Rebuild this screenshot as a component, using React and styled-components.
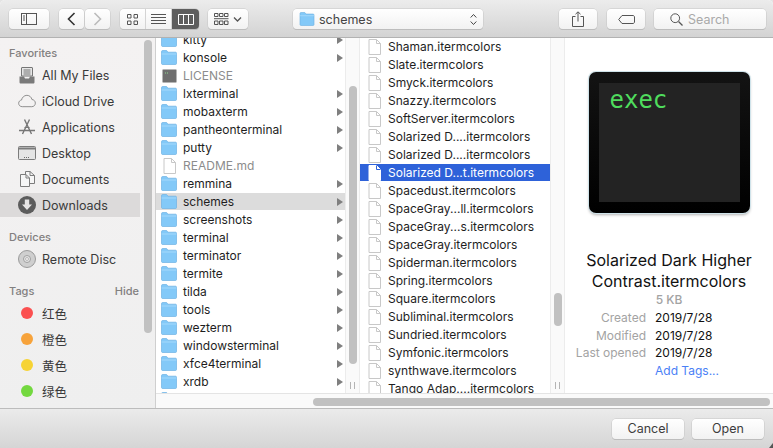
import React from 'react';
import styled, { createGlobalStyle } from 'styled-components';

const Global = createGlobalStyle`
	html, body { margin: 0; padding: 0; background: #e4e4e4; }
	body { font-family: Inter, "Noto Sans CJK SC", sans-serif; -webkit-font-smoothing: antialiased; }
	* { box-sizing: border-box; }
`;

const Win = styled.div`
	position: relative;
	width: 773px;
	height: 448px;
	display: flex;
	flex-direction: column;
	overflow: hidden;
	border-radius: 5px 5px 0 0;
	background: #fff;
`;

const Toolbar = styled.div`
	height: 38px;
	flex: none;
	display: flex;
	align-items: center;
	padding: 1px 8px 0 9px;
	background: linear-gradient(#ececec, #d3d3d3);
	border-bottom: 1px solid #b2b2b2;
`;

const Btn = styled.div`
	width: ${p => p.$w}px;
	height: 20px;
	margin-left: ${p => p.$ml || 0}px;
	flex: none;
	display: flex;
	align-items: center;
	justify-content: center;
	background: linear-gradient(#ffffff, #f2f2f2);
	border-radius: 4px;
	box-shadow: 0 0 0 0.5px #c6c6c6, 0 1px 0 #b4b4b4;
`;

const Seg = styled.div`
	width: ${p => p.$w}px;
	height: 20px;
	display: flex;
	align-items: center;
	justify-content: center;
	background: ${p => (p.$on ? '#5e5e5e' : 'linear-gradient(#ffffff, #f2f2f2)')};
	border-right: ${p => (p.$last ? 'none' : '1px solid #d4d4d4')};
`;

const Group = styled.div`
	display: flex;
	margin-left: ${p => p.$ml}px;
	border-radius: 4px;
	overflow: hidden;
	flex: none;
	box-shadow: 0 0 0 0.5px #c6c6c6, 0 1px 0 #b4b4b4;
`;

const PathLabel = styled.span`
	flex: 1;
	font-size: 12.5px;
	color: #444;
	margin-left: 4px;
`;

const PathBtn = styled(Btn)`
	justify-content: flex-start;
	padding: 0 6px;
`;

const SearchBox = styled(Btn)`
	justify-content: flex-start;
	padding-left: 16px;
	gap: 5px;
	font-size: 12.5px;
	color: #a9a9a9;
`;

const Main = styled.div`
	flex: 1;
	min-height: 0;
	display: flex;
`;

const Sidebar = styled.div`
	position: relative;
	width: 156px;
	flex: none;
	padding-top: 6px;
	background: linear-gradient(#f4f2f2, #efefef);
	border-right: 1px solid #cfcfcf;
	overflow: hidden;
`;

const SideHead = styled.div`
	height: 18px;
	margin-top: ${p => p.$mt || 0}px;
	padding: 0 16px 0 9px;
	display: flex;
	align-items: center;
	justify-content: space-between;
	font-size: 11px;
	font-weight: 500;
	color: #828080;
`;

const SideRow = styled.div`
	height: 26px;
	display: flex;
	align-items: center;
	width: 140px;
	gap: 6px;
	padding-left: ${p => (p.$tag ? 21 : 18)}px;
	font-size: 12.5px;
	color: #3a3a3a;
	background: ${p => (p.$on ? '#dcdada' : 'transparent')};
	box-shadow: ${p => (p.$on ? 'inset 0 1px 0 #f3f1f1, inset 0 -1px 0 #f3f1f1' : 'none')};
`;

const IconBox = styled.span`
	width: ${p => p.$w || 18}px;
	height: 18px;
	display: flex;
	align-items: center;
	justify-content: center;
	flex: none;
`;

const Dot = styled.span`
	width: 12px;
	height: 12px;
	border-radius: 50%;
	margin-right: 3px;
	flex: none;
	background: ${p => p.$c};
`;

const Thumb = styled.div`
	position: absolute;
	width: 8px;
	left: ${p => p.$l}px;
	top: ${p => p.$t}px;
	height: ${p => p.$h}px;
	border-radius: 4px;
	background: #c1c1c1;
`;

const Browser = styled.div`
	flex: 1;
	min-width: 0;
	display: flex;
	flex-direction: column;
`;

const Columns = styled.div`
	height: 355px;
	flex: none;
	display: flex;
	overflow: hidden;
`;

const Column = styled.div`
	width: ${p => p.$w}px;
	flex: none;
	overflow: hidden;
`;

const List = styled.div`
	margin-top: ${p => p.$mt || 0}px;
`;

const Row = styled.div`
	height: 17px;
	margin-bottom: 1px;
	display: flex;
	align-items: center;
	font-size: 12px;
	white-space: nowrap;
	padding-left: ${p => p.$pad}px;
	padding-right: 2px;
	color: ${p => (p.$sel ? '#fff' : p.$dim ? '#8c8c8c' : '#1e1e1e')};
	background: ${p => (p.$sel ? '#2e62d9' : p.$act ? '#dcdcdc' : 'transparent')};
`;

const RowText = styled.span`
	flex: 1;
	margin-left: ${p => p.$ml}px;
`;

const Gutter = styled.div`
	position: relative;
	width: 15px;
	flex: none;
	background: #fafafa;
	border-left: 1px solid #ececec;
	border-right: 1px solid #ececec;
`;

const Handle = styled.span`
	position: absolute;
	left: 4px;
	bottom: 4px;
	width: 5px;
	height: 7px;
	border-left: 1px solid #b4b4b4;
	border-right: 1px solid #b4b4b4;
`;

const Preview = styled.div`
	flex: 1;
	display: flex;
	flex-direction: column;
	align-items: center;
	padding-top: 34px;
`;

const Tile = styled.div`
	width: 161px;
	height: 141px;
	padding: 11px 10px;
	border-radius: 7px;
	background: linear-gradient(#131313, #000);
	box-shadow: 0 0 0 1px #cfe3ea, 0 2px 3px rgba(0, 0, 0, 0.3);
`;

const Screen = styled.div`
	height: 119px;
	padding: 0 11px;
	background: #232323;
	color: #4fdc5d;
	font: 24px/34px "DejaVu Sans Mono", monospace;
`;

const FileName = styled.div`
	margin-top: 37px;
	text-align: center;
	font-size: 16px;
	line-height: 21px;
	color: #111;
`;

const Size = styled.div`
	margin-top: -1px;
	font-size: 12px;
	font-weight: 500;
	line-height: 18px;
	color: #a3a3a3;
`;

const Meta = styled.div`
	width: 100%;
	display: grid;
	grid-template-columns: 81px 1fr;
	column-gap: 9px;
	font-size: 12px;
	line-height: 17.5px;
`;

const MetaKey = styled.div`
	text-align: right;
	color: #a3a3a3;
	white-space: nowrap;
`;

const MetaVal = styled.div`
	color: ${p => (p.$link ? '#4a80f6' : '#111')};
`;

const HBar = styled.div`
	position: relative;
	height: 15px;
	flex: none;
	background: #fafafa;
	border-top: 1px solid #e4e4e4;
`;

const HThumb = styled.div`
	position: absolute;
	left: 157px;
	right: 3px;
	top: 4px;
	height: 8px;
	border-radius: 4px;
	background: #c1c1c1;
`;

const Footer = styled.div`
	height: 40px;
	flex: none;
	display: flex;
	justify-content: flex-end;
	align-items: center;
	gap: 8px;
	padding: 0 9px 0 0;
	background: linear-gradient(#ebebeb, #d5d5d5);
	border-top: 1px solid #bcbcbc;
`;

const ActionBtn = styled(Btn)`
	font-size: 12.5px;
	color: #3d3d3d;
`;

const Grip = styled.svg`
	position: absolute;
	right: 0;
	bottom: 0;
`;

const Folder = ({ w = 16, h = 15 }) => (
	<svg width={w} height={h} viewBox="0 0 16 15">
		<path d="M0.5 3V1.6C0.5 1 1 .5 1.6 .5H5.6L7 2.2H14.6C15.1 2.2 15.5 2.6 15.5 3.1V13.5C15.5 14 15.1 14.5 14.5 14.5H1.5C1 14.5 .5 14 .5 13.5Z" fill="#83c9f8" stroke="#6fb2e4" strokeWidth="0.7" />
		<path d="M.6 4H15.4" stroke="#a5d9fb" strokeWidth="1" />
	</svg>
);

const Doc = ({ sel }) => (
	<svg width="13" height="16" viewBox="0 0 13 16">
		<path d="M1 .5H8.5L12.5 4.5V15.5H1Z" fill="#fff" stroke={sel ? '#fff' : '#c8c8c8'} />
		<path d="M8.5 .5V4.5H12.5" fill="none" stroke={sel ? '#2e62d9' : '#c8c8c8'} />
	</svg>
);

const ExecDoc = () => (
	<svg width="15" height="14" viewBox="0 0 15 14">
		<rect x=".5" y=".5" width="14" height="13" rx="1" fill="#6f6f6f" stroke="#b5b5b5" />
		<path d="M3 4H7" stroke="#8fd98f" strokeDasharray="1 1" />
	</svg>
);

const Arrow = () => (
	<svg width="6" height="8" viewBox="0 0 6 8">
		<path d="M0 0L6 4L0 8Z" fill="#7f7f7f" />
	</svg>
);

const stroke = { fill: 'none', stroke: '#555', strokeWidth: 1 };

const sideIcons = {
	files: (
		<svg width="16" height="17" viewBox="0 0 16 17">
			<path d="M2.5 1C2.5 .7 2.7 .5 3 .5H13C13.3 .5 13.5 .7 13.5 1V9H2.5Z" fill="#e6e6e6" stroke="#757575" />
			<path d="M4.5 3H11.5M4.5 5H11.5M4.5 7H11.5" stroke="#757575" />
			<path d="M.5 9.5H5L6 11.5H10L11 9.5H15.5V15C15.5 16 15 16.5 14 16.5H2C1 16.5 .5 16 .5 15Z" fill="#7a7a7a" />
		</svg>
	),
	cloud: (
		<svg width="19" height="14" viewBox="0 0 19 14">
			<path d="M4.5 13C2.2 13 .7 11.4.7 9.4C.7 7.6 2 6.2 3.7 6C4.2 3.4 6.4 1 9.4 1C12.2 1 14.2 3 14.7 5.4C16.8 5.6 18.3 7.2 18.3 9.2C18.3 11.4 16.8 13 14.5 13Z" fill="none" stroke="#8a8a8a" />
		</svg>
	),
	apps: (
		<svg width="18" height="18" viewBox="0 0 18 18">
			<path d="M6.5 1.5L13.5 16M11.5 1.5L4.5 16M1 12.5H17" fill="none" stroke="#767676" strokeWidth="1.4" />
			<path d="M6.5 9.5H11.5" stroke="#767676" />
		</svg>
	),
	desktop: (
		<svg width="18" height="14" viewBox="0 0 18 14">
			<rect x=".5" y=".5" width="17" height="13" rx="1" fill="#e4e4e4" stroke="#7c7c7c" />
			<path d="M1 2.5H17" stroke="#7c7c7c" strokeWidth="2" />
			<path d="M6 11.5H7M8 11.5H9M10 11.5H11" stroke="#6a6a6a" />
		</svg>
	),
	docs: (
		<svg width="17" height="16" viewBox="0 0 17 16">
			<path d="M6.5 .5H11L15.5 4.5V12.5H6.5Z" fill="#f6f6f6" stroke="#7c7c7c" />
			<path d="M1.5 3.5H7L10.5 7V15.5H1.5Z" fill="#f6f6f6" stroke="#7c7c7c" />
			<path d="M7 3.5V7H10.5M11 .5V4.5H15.5" fill="none" stroke="#7c7c7c" />
		</svg>
	),
	down: (
		<svg width="18" height="18" viewBox="0 0 18 18">
			<circle cx="9" cy="9" r="9" fill="#5c5c5c" />
			<path d="M6.8 3.5H11.2V8.5H14L9 14L4 8.5H6.8Z" fill="#e6e4e4" />
		</svg>
	),
	disc: (
		<svg width="18" height="18" viewBox="0 0 18 18">
			<circle cx="9" cy="9" r="8.5" fill="#cfcfcf" stroke="#9a9a9a" />
			<circle cx="9" cy="9" r="3.5" fill="#e5e5e5" stroke="#9f9f9f" />
			<circle cx="9" cy="9" r="1.5" fill="#f3f1f1" stroke="#999" strokeWidth="0.6" />
		</svg>
	)
};

const favorites = [
	['files', 'All My Files'],
	['cloud', 'iCloud Drive'],
	['apps', 'Applications'],
	['desktop', 'Desktop'],
	['docs', 'Documents'],
	['down', 'Downloads', true]
];

const tags = [
	['#fb5050', '红色'],
	['#f7a33b', '橙色'],
	['#f6d334', '黄色'],
	['#73d83f', '绿色']
];

// the last entry only shows the top edge of its folder, its name is below the fold
const folders = [
	['kitty'], ['konsole'], ['LICENSE', 'exec'], ['lxterminal'], ['mobaxterm'],
	['pantheonterminal'], ['putty'], ['README.md', 'doc'], ['remmina'], ['schemes', 'act'],
	['screenshots'], ['terminal'], ['terminator'], ['termite'], ['tilda'], ['tools'],
	['wezterm'], ['windowsterminal'], ['xfce4terminal'], ['xrdb'], ['']
];

const files = [
	'Shaman.itermcolors', 'Slate.itermcolors', 'Smyck.itermcolors', 'Snazzy.itermcolors',
	'SoftServer.itermcolors', 'Solarized D....itermcolors', 'Solarized D....itermcolors',
	'Solarized D...t.itermcolors', 'Spacedust.itermcolors', 'SpaceGray...ll.itermcolors',
	'SpaceGray...s.itermcolors', 'SpaceGray.itermcolors', 'Spiderman.itermcolors',
	'Spring.itermcolors', 'Square.itermcolors', 'Subliminal.itermcolors',
	'Sundried.itermcolors', 'Symfonic.itermcolors', 'synthwave.itermcolors',
	'Tango Adap....itermcolors'
];

const FolderRow = ({ name, kind }) => {
	const isFile = kind === 'exec' || kind === 'doc';
	return (
		<Row $pad={5} $dim={isFile} $act={kind === 'act'}>
			<IconBox $w={16}>
				{kind === 'exec' ? <ExecDoc /> : kind === 'doc' ? <Doc /> : <Folder />}
			</IconBox>
			<RowText $ml={6}>{name}</RowText>
			{!isFile && <Arrow />}
		</Row>
	);
};

const App = () => (
	<Win>
		<Global />
		<Toolbar>
			<Btn $w={40}>
				<svg width="16" height="12" viewBox="0 0 16 12">
					<rect x=".5" y=".5" width="15" height="11" fill="none" stroke="#555" />
					<path d="M5.5 .5V11.5M2 3H4M2 5H4M2 7H4" {...stroke} />
				</svg>
			</Btn>
			<Btn $w={25} $ml={10}>
				<svg width="9" height="14" viewBox="0 0 9 14">
					<path d="M7.5 1L1.5 7L7.5 13" fill="none" stroke="#333" strokeWidth="1.6" />
				</svg>
			</Btn>
			<Btn $w={25} $ml={1}>
				<svg width="9" height="14" viewBox="0 0 9 14">
					<path d="M1.5 1L7.5 7L1.5 13" fill="none" stroke="#bbb" strokeWidth="1.6" />
				</svg>
			</Btn>
			<Group $ml={10}>
				<Seg $w={26}>
					<svg width="11" height="11" viewBox="0 0 11 11">
						<path d="M.5 .5H4V4H.5ZM7 .5H10.5V4H7ZM.5 7H4V10.5H.5ZM7 7H10.5V10.5H7Z" {...stroke} />
					</svg>
				</Seg>
				<Seg $w={26}>
					<svg width="15" height="10" viewBox="0 0 15 10">
						<path d="M0 .5H15M0 3.5H15M0 6.5H15M0 9.5H15" {...stroke} />
					</svg>
				</Seg>
				<Seg $w={27} $on $last>
					<svg width="16" height="11" viewBox="0 0 16 11">
						<path d="M.5 .5H15.5V10.5H.5ZM5.5 .5V10.5M10.5 .5V10.5" fill="none" stroke="#fff" />
					</svg>
				</Seg>
			</Group>
			<Btn $w={40} $ml={9}>
				<svg width="28" height="12" viewBox="0 0 28 12">
					<path d="M.5 .5H4V3.5H.5ZM5.5 .5H9V3.5H5.5ZM10.5 .5H14V3.5H10.5ZM.5 8H4V11.5H.5ZM5.5 8H9V11.5H5.5ZM10.5 8H14V11.5H10.5ZM0 5.7H14.5" {...stroke} />
					<path d="M20 4.5L23.5 8L27 4.5" fill="none" stroke="#555" strokeWidth="1.3" />
				</svg>
			</Btn>
			<PathBtn $w={190} $ml={45}>
				<Folder w={16} h={14} />
				<PathLabel>schemes</PathLabel>
				<svg width="7" height="13" viewBox="0 0 7 13">
					<path d="M.7 4.5L3.5 1.5L6.3 4.5M.7 8.5L3.5 11.5L6.3 8.5" fill="none" stroke="#444" />
				</svg>
			</PathBtn>
			<Btn $w={38} $ml={76}>
				<svg width="12" height="16" viewBox="0 0 12 16">
					<path d="M3.5 5.5H.5V15.5H11.5V5.5H8.5M6 10.5V1M3.5 3.2L6 .8L8.5 3.2" {...stroke} />
				</svg>
			</Btn>
			<Btn $w={38} $ml={10}>
				<svg width="17" height="9" viewBox="0 0 17 9">
					<path d="M4 .5H15C15.8.5 16.5 1.2 16.5 2V7C16.5 7.8 15.8 8.5 15 8.5H4L.7 4.5Z" {...stroke} />
				</svg>
			</Btn>
			<SearchBox $w={112} $ml={9}>
				<svg width="13" height="13" viewBox="0 0 13 13">
					<circle cx="5.2" cy="5.2" r="4.4" {...stroke} />
					<path d="M8.5 8.5L12.5 12.5" stroke="#555" strokeWidth="1.3" />
				</svg>
				Search
			</SearchBox>
		</Toolbar>
		<Main>
			<Sidebar>
				<SideHead>Favorites</SideHead>
				{favorites.map(([icon, label, on]) => (
					<SideRow key={label} $on={on}>
						<IconBox>{sideIcons[icon]}</IconBox>
						{label}
					</SideRow>
				))}
				<SideHead $mt={10}>Devices</SideHead>
				<SideRow>
					<IconBox>{sideIcons.disc}</IconBox>
					Remote Disc
				</SideRow>
				<SideHead $mt={10}>
					Tags<span>Hide</span>
				</SideHead>
				{tags.map(([c, label]) => (
					<SideRow key={label} $tag>
						<Dot $c={c} />
						{label}
					</SideRow>
				))}
				<Thumb $l={144} $t={2} $h={293} />
			</Sidebar>
			<Browser>
				<Columns>
					<Column $w={189}>
						<List $mt={-7}>
							{folders.map(([name, kind]) => (
								<FolderRow key={name || 'cut'} name={name} kind={kind} />
							))}
						</List>
					</Column>
					<Gutter>
						<Thumb $l={3} $t={48} $h={278} />
						<Handle />
					</Gutter>
					<Column $w={190}>
						<List>
							{files.map((name, i) => (
								<Row key={name + i} $pad={8} $sel={i === 7}>
									<IconBox $w={13}>
										<Doc sel={i === 7} />
									</IconBox>
									<RowText $ml={7}>{name}</RowText>
								</Row>
							))}
						</List>
					</Column>
					<Gutter>
						<Thumb $l={3} $t={255} $h={33} />
						<Handle />
					</Gutter>
					<Preview>
						<Tile>
							<Screen>exec</Screen>
						</Tile>
						<FileName>
							Solarized Dark Higher
							<br />
							Contrast.itermcolors
						</FileName>
						<Size>5 KB</Size>
						<Meta>
							<MetaKey>Created</MetaKey>
							<MetaVal>2019/7/28</MetaVal>
							<MetaKey>Modified</MetaKey>
							<MetaVal>2019/7/28</MetaVal>
							<MetaKey>Last opened</MetaKey>
							<MetaVal>2019/7/28</MetaVal>
							<span />
							<MetaVal $link>Add Tags...</MetaVal>
						</Meta>
					</Preview>
				</Columns>
				<HBar>
					<HThumb />
				</HBar>
			</Browser>
		</Main>
		<Footer>
			<ActionBtn $w={72}>Cancel</ActionBtn>
			<ActionBtn $w={72}>Open</ActionBtn>
		</Footer>
		<Grip width="4" height="5" viewBox="0 0 4 5">
			<path d="M4 0L0 5H4Z" fill="#555" />
		</Grip>
	</Win>
);

export default App;
